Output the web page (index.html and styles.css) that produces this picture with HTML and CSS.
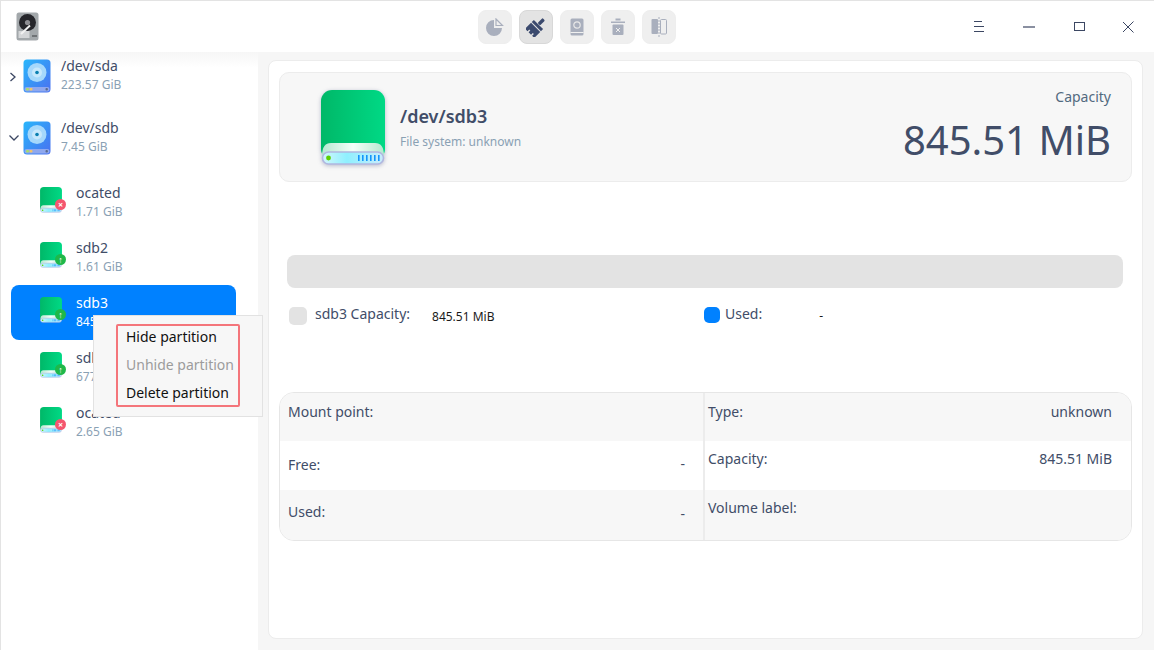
FILE: index.html
```html
<!DOCTYPE html>
<html lang="en">
<head>
  <meta charset="UTF-8" />
  <title>Disk Utility</title>
  <link rel="stylesheet" href="styles.css">
</head>
<body>
  <svg class="defs" width="0" height="0">
    <defs>
      <linearGradient id="blue-disk" x1="0" y1="0" x2="1" y2="1">
        <stop offset="0" stop-color="#29b6fb"/><stop offset="1" stop-color="#4a70f0"/>
      </linearGradient>
      <linearGradient id="green-disk" x1="0" y1="0" x2="1" y2="0">
        <stop offset="0" stop-color="#00b868"/><stop offset="1" stop-color="#00d985"/>
      </linearGradient>
      <linearGradient id="green-lip" x1="0" y1="0" x2="1" y2="0">
        <stop offset="0" stop-color="#b5e8d0"/><stop offset=".5" stop-color="#f4fffa"/><stop offset="1" stop-color="#b5e8d0"/>
      </linearGradient>
      <linearGradient id="green-base" x1="0" y1="0" x2="1" y2="0">
        <stop offset="0" stop-color="#d2f6fb"/><stop offset=".4" stop-color="#8ff0ff"/><stop offset="1" stop-color="#c9ecfb"/>
      </linearGradient>
      <symbol id="disk" viewBox="0 0 28 34">
        <rect x="0.5" y="0.5" width="27" height="33" rx="3.5" fill="url(#blue-disk)"/>
        <circle cx="14" cy="13.5" r="9.5" fill="#a5d8fb"/>
        <circle cx="14" cy="13.5" r="5" fill="#c7e8fc"/>
        <circle cx="14" cy="13.5" r="1.8" fill="#0a7fb0"/>
        <rect x="1.5" y="28" width="25" height="4.5" rx="2" fill="#8fa8ee"/>
        <rect x="3" y="29" width="3" height="2.4" rx="1" fill="#a8dc6c"/>
        <rect x="6.5" y="29" width="3" height="2.4" rx="1" fill="#f2c46a"/>
        <rect x="22.5" y="29" width="2.4" height="2.4" rx="1" fill="#596a8e"/>
      </symbol>
      <symbol id="part" viewBox="0 0 64 76">
        <rect x="0" y="0" width="64" height="70" rx="11" fill="url(#green-disk)"/>
        <path d="M1 66 q0 -13 9 -13 h44 q9 0 9 13 z" fill="url(#green-lip)"/>
        <rect x="1.5" y="62" width="61" height="12" rx="6" fill="url(#green-base)" stroke="#b0b6e0" stroke-width="1.6"/>
        <circle cx="7.5" cy="68" r="2.4" fill="#5fd000"/>
        <g fill="#1496fb">
          <rect x="37" y="65" width="1.6" height="6"/><rect x="41" y="65" width="1.6" height="6"/>
          <rect x="45" y="65" width="1.6" height="6"/><rect x="49" y="65" width="1.6" height="6"/>
          <rect x="53" y="65" width="1.6" height="6"/><rect x="57" y="65" width="1.6" height="6"/>
        </g>
      </symbol>
    </defs>
  </svg>

  <div class="window">
    <header class="titlebar">
      <div class="app-icon">
        <svg width="24" height="29" viewBox="0 0 24 29">
          <rect x="0.5" y="0.5" width="22" height="28" rx="2.5" fill="#a3a8ab"/>
          <circle cx="11.5" cy="10.5" r="8.5" fill="#26262b"/>
          <circle cx="11.5" cy="10.5" r="2.6" fill="#8d8d92"/>
          <rect x="2.5" y="19" width="11" height="7" fill="#d4d6d8"/>
          <path d="M5 22 L14 13.5" stroke="#f2f2f2" stroke-width="2"/>
          <rect x="16" y="23" width="5" height="2" fill="#6f7376"/>
        </svg>
      </div>

      <div class="toolbar">
        <button class="tool-btn">
          <svg width="18" height="18" viewBox="0 0 18 18">
            <path d="M8 2 A8 8 0 1 0 16 10 H8 Z" fill="#a9afbd"/>
            <path d="M10 1 L16.5 7.5 H10 Z" fill="none" stroke="#a9afbd" stroke-width="1.2"/>
          </svg>
        </button>
        <button class="tool-btn active">
          <svg width="20" height="20" viewBox="0 0 20 20">
            <g transform="rotate(45 10 10)" fill="#3b4a6e">
              <rect x="8.3" y="-1" width="3.4" height="7" rx="1"/>
              <rect x="3.5" y="6.5" width="13" height="3"/>
              <path d="M3.5 10.5 H16.5 V19 H13.5 V16.5 H12 V19 H8.5 V16.5 H7 V19 H3.5 Z"/>
            </g>
          </svg>
        </button>
        <button class="tool-btn">
          <svg width="14" height="18" viewBox="0 0 14 18">
            <rect x="0.5" y="0.5" width="13" height="17" rx="1.5" fill="#a9afbd"/>
            <rect x="0.5" y="14" width="13" height="1" fill="#f0f0f0"/>
            <circle cx="7" cy="7" r="3.2" fill="none" stroke="#e8e8e8" stroke-width="1.2"/>
          </svg>
        </button>
        <button class="tool-btn">
          <svg width="16" height="18" viewBox="0 0 16 18">
            <rect x="5.5" y="0.5" width="5" height="2" fill="#a9afbd"/>
            <rect x="1" y="3.5" width="14" height="1.5" fill="#a9afbd"/>
            <rect x="2.5" y="6.5" width="11" height="10.5" rx="1" fill="#a9afbd"/>
            <path d="M6 10 L10 14 M10 10 L6 14" stroke="#eee" stroke-width="1"/>
          </svg>
        </button>
        <button class="tool-btn">
          <svg width="16" height="20" viewBox="0 0 16 20">
            <rect x="0.5" y="2" width="6.5" height="15" rx="1" fill="#a9afbd"/>
            <rect x="9.5" y="2.5" width="6" height="14.5" rx="1" fill="none" stroke="#a9afbd"/>
            <path d="M8 0 V20" stroke="#a9afbd" stroke-dasharray="2 1"/>
          </svg>
        </button>
      </div>

      <div class="win-controls">
        <button class="win-btn">
          <svg width="12" height="11" viewBox="0 0 12 11"><path d="M1 .5 H9 M1 5.5 H11 M1 10.5 H11" stroke="#3c4763"/></svg>
        </button>
        <button class="win-btn">
          <svg width="12" height="2" viewBox="0 0 12 2"><path d="M0 1 H12" stroke="#3c4763" stroke-width="1.2"/></svg>
        </button>
        <button class="win-btn">
          <svg width="12" height="10" viewBox="0 0 12 10"><rect x="1.5" y=".5" width="10" height="8" fill="none" stroke="#3c4763"/></svg>
        </button>
        <button class="win-btn">
          <svg width="12" height="12" viewBox="1 0 12 12"><path d="M.5 .5 L11.5 11.5 M11.5 .5 L.5 11.5" stroke="#3c4763"/></svg>
        </button>
      </div>
    </header>

    <div class="body-row">
      <aside class="sidebar">
        <div class="disk-row">
          <svg class="chevron" width="8" height="10" viewBox="0 0 8 10"><path d="M1.5 1 L6 5 L1.5 9" fill="none" stroke="#3c4763" stroke-width="1.3"/></svg>
          <svg class="disk-icon" width="28" height="34"><use href="#disk"/></svg>
          <div class="names">
            <span class="name">/dev/sda</span>
            <span class="size">223.57 GiB</span>
          </div>
        </div>
        <div class="disk-row">
          <svg class="chevron" width="10" height="8" viewBox="0 0 10 8"><path d="M.5 1.5 L5 6 L9.5 1.5" fill="none" stroke="#3c4763" stroke-width="1.3"/></svg>
          <svg class="disk-icon" width="28" height="34"><use href="#disk"/></svg>
          <div class="names">
            <span class="name">/dev/sdb</span>
            <span class="size">7.45 GiB</span>
          </div>
        </div>

        <ul class="part-list">
          <li class="part-row">
            <span class="part-icon">
              <svg width="22" height="26"><use href="#part"/></svg>
              <span class="badge bad">×</span>
            </span>
            <div class="names"><span class="name">ocated</span><span class="size">1.71 GiB</span></div>
          </li>
          <li class="part-row">
            <span class="part-icon">
              <svg width="22" height="26"><use href="#part"/></svg>
              <span class="badge ok">↑</span>
            </span>
            <div class="names"><span class="name">sdb2</span><span class="size">1.61 GiB</span></div>
          </li>
          <li class="part-row selected">
            <span class="part-icon">
              <svg width="22" height="26"><use href="#part"/></svg>
              <span class="badge ok">↑</span>
            </span>
            <div class="names"><span class="name">sdb3</span><span class="size">845.51 MiB</span></div>
          </li>
          <li class="part-row">
            <span class="part-icon">
              <svg width="22" height="26"><use href="#part"/></svg>
              <span class="badge ok">↑</span>
            </span>
            <div class="names"><span class="name">sdb4</span><span class="size">677.00 MiB</span></div>
          </li>
          <li class="part-row">
            <span class="part-icon">
              <svg width="22" height="26"><use href="#part"/></svg>
              <span class="badge bad">×</span>
            </span>
            <div class="names"><span class="name">ocated</span><span class="size">2.65 GiB</span></div>
          </li>
        </ul>
      </aside>

      <main class="content">
        <section class="panel">
          <div class="info-card">
            <svg class="big-disk" width="64" height="76"><use href="#part"/></svg>
            <div class="info-names">
              <span class="info-title">/dev/sdb3</span>
              <span class="info-fs">File system: unknown</span>
            </div>
            <div class="capacity">
              <span class="cap-label">Capacity</span>
              <span class="cap-value">845.51 MiB</span>
            </div>
          </div>

          <div class="usage-bar"></div>

          <div class="legend">
            <div class="legend-item first">
              <span class="swatch grey"></span>
              <span class="legend-label">sdb3 Capacity:</span>
              <span class="legend-value cap">845.51 MiB</span>
            </div>
            <div class="legend-item">
              <span class="swatch blue"></span>
              <span class="legend-label">Used:</span>
              <span class="legend-value used">-</span>
            </div>
          </div>

          <div class="details">
            <div class="detail-row">
              <div class="cell"><span>Mount point:</span></div>
              <div class="cell"><span>Type:</span><span>unknown</span></div>
            </div>
            <div class="detail-row">
              <div class="cell"><span>Free:</span><span class="dash">-</span></div>
              <div class="cell"><span>Capacity:</span><span>845.51 MiB</span></div>
            </div>
            <div class="detail-row">
              <div class="cell"><span>Used:</span><span class="dash low">-</span></div>
              <div class="cell"><span>Volume label:</span></div>
            </div>
          </div>
        </section>
      </main>
    </div>

    <div class="context-menu">
      <div class="menu-frame">
        <div class="menu-item">Hide partition</div>
        <div class="menu-item disabled">Unhide partition</div>
        <div class="menu-item">Delete partition</div>
      </div>
    </div>
  </div>
</body>
</html>
```

FILE: styles.css
```css
* { box-sizing: border-box; }

html, body {
  margin: 0;
  height: 100%;
  overflow: hidden;
}

body {
  font-family: 'Noto Sans', sans-serif;
  font-size: 14px;
  color: #414d68;
  background: #fff;
}

.defs { position: absolute; }

.window {
  position: relative;
  width: 1154px;
  height: 650px;
  display: flex;
  flex-direction: column;
  border-top: 1px solid #e3e3e3;
  border-left: 1px solid #e3e3e3;
}

/* title bar */
.titlebar {
  height: 51px;
  flex: none;
  display: flex;
  align-items: center;
  background: #fff;
  position: relative;
}

.app-icon {
  width: 477px;
  padding-left: 15px;
  display: flex;
  align-items: center;
}

.toolbar {
  display: flex;
  gap: 7px;
}

.tool-btn {
  width: 34px;
  height: 34px;
  padding: 0;
  border: 1px solid #eeeeee;
  border-radius: 8px;
  background: #efefef;
  display: flex;
  align-items: center;
  justify-content: center;
}

.tool-btn.active {
  background: #e3e3e3;
  border-color: #d8d8d8;
}

.win-controls {
  margin-left: auto;
  display: flex;
}

.win-btn {
  width: 50px;
  height: 50px;
  padding: 0;
  border: none;
  background: none;
  display: flex;
  align-items: center;
  justify-content: center;
}

/* sidebar */
.body-row {
  flex: 1;
  display: flex;
  min-height: 0;
}

.sidebar {
  width: 257px;
  flex: none;
  background: linear-gradient(#f6f6f6, #ffffff 16px);
  padding-top: 3px;
}

.disk-row {
  height: 62px;
  display: flex;
  align-items: flex-start;
  padding-top: 1px;
  position: relative;
  padding-left: 22px;
}

.chevron {
  position: absolute;
  left: 8px;
  top: 17px;
}

.disk-icon {
  flex: none;
  margin-top: 3px;
}

.disk-row .names {
  margin-left: 10px;
}

.names {
  display: flex;
  flex-direction: column;
  line-height: 19px;
}

.name {
  font-size: 14px;
  color: #414d68;
}

.size {
  font-size: 12px;
  color: #8aa1b4;
  line-height: 20px;
}

.part-list {
  list-style: none;
  margin: 0;
  padding: 0;
  margin-top: -4px;
}

.part-row {
  height: 55px;
  width: 225px;
  margin-left: 10px;
  padding-left: 29px;
  border-radius: 8px;
  display: flex;
  align-items: center;
}

.part-row.selected {
  background: #0081ff;
}

.part-row.selected .name,
.part-row.selected .size {
  color: #fff;
}

.part-icon {
  position: relative;
  width: 22px;
  height: 26px;
  flex: none;
  margin-right: 14px;
  margin-top: -5px;
}

.part-icon svg { display: block; }

.badge {
  position: absolute;
  right: -4px;
  bottom: 3px;
  width: 11px;
  height: 11px;
  border-radius: 50%;
  color: #fff;
  font-size: 9px;
  font-weight: 700;
  line-height: 11px;
  text-align: center;
}

.badge.bad { background: #f4566f; }
.badge.ok { background: #1fb84a; }

/* right side */
.content {
  flex: 1;
  min-width: 0;
  background: #f6f6f6;
  padding: 8px 11px 11px 10px;
}

.panel {
  height: 100%;
  background: #fff;
  border: 1px solid #ececec;
  border-radius: 8px;
  padding: 11px 10px 0;
}

.info-card {
  height: 110px;
  background: #f7f7f7;
  border: 1px solid #ececec;
  border-radius: 10px;
  display: flex;
  align-items: center;
  padding: 0 20px 0 41px;
}

.big-disk {
  flex: none;
  margin-top: 1px;
  filter: drop-shadow(0 1px 2px rgba(60, 70, 120, 0.35));
}

.info-names {
  display: flex;
  flex-direction: column;
  margin-left: 15px;
  margin-top: 2px;
}

.info-title {
  font-size: 18px;
  font-weight: 600;
  line-height: 26px;
  margin-bottom: 2px;
  color: #414d68;
}

.info-fs {
  font-size: 12px;
  line-height: 22px;
  color: #8aa1b4;
}

.capacity {
  margin-left: auto;
  display: flex;
  flex-direction: column;
  align-items: flex-end;
}

.cap-label {
  font-size: 14px;
  line-height: 20px;
  color: #526a7f;
}

.cap-value {
  font-size: 40px;
  line-height: 54px;
  margin-top: 6px;
  color: #414d68;
}

.usage-bar {
  height: 33px;
  margin: 73px 9px 0 8px;
  background: #e3e3e3;
  border-radius: 8px;
}

.legend {
  display: flex;
  margin-top: 17px;
  padding-left: 10px;
  height: 22px;
  align-items: center;
}

.legend-item {
  display: flex;
  align-items: center;
}

.legend-item.first {
  width: 415px;
}

.swatch {
  width: 18px;
  height: 18px;
  border-radius: 5px;
  flex: none;
}

.swatch.grey { background: #e3e3e3; }

.swatch.blue {
  background: #0081ff;
  width: 16px;
  height: 16px;
  position: relative;
  top: -1px;
}

.legend-label {
  margin-left: 8px;
  line-height: 18px;
  position: relative;
  top: -2px;
}

.swatch.blue + .legend-label { margin-left: 5px; }

.legend-value {
  font-size: 12px;
  color: #1a1a1a;
}

.legend-value.cap { margin-left: 22px; }

.legend-value.used {
  margin-left: 57px;
  position: relative;
  top: -1px;
}

.details {
  margin-top: 65px;
  height: 149px;
  border: 1px solid #e6e6e6;
  border-radius: 15px;
  overflow: hidden;
  display: flex;
  flex-direction: column;
}

.detail-row {
  height: 49px;
  display: flex;
  background: #fff;
}

.detail-row:nth-child(odd) {
  background: #f7f7f7;
}

.detail-row:nth-child(1) { height: 48px; }
.detail-row:nth-child(3) { height: 50px; }

.cell {
  flex: 1;
  display: flex;
  justify-content: space-between;
  padding: 9px 19px 0 3px;
  line-height: 20px;
}

.cell:first-child {
  width: 425px;
  flex: none;
  padding: 9px 18px 0 8px;
  border-right: 2px solid #ececec;
}

.detail-row:nth-child(2) .cell:first-child { padding-top: 14px; }
.detail-row:nth-child(3) .cell:first-child { padding-top: 12px; }
.detail-row:nth-child(n+2) .cell:last-child { padding-top: 8px; }

.dash {
  font-size: 14px;
  position: relative;
  top: -1px;
}

.dash.low {
  top: 2px;
}

/* popup menu over the selected row */
.context-menu {
  position: absolute;
  left: 92px;
  top: 314px;
  width: 170px;
  height: 102px;
  background: #f7f7f7;
  border: 1px solid #e2e2e2;
  padding: 8px 0 0 22px;
}

.menu-frame {
  width: 124px;
  height: 83px;
  border: 2px solid #f4757b;
  border-radius: 2px;
  padding-left: 8px;
}

.menu-item {
  height: 28px;
  line-height: 22px;
  color: #111;
  white-space: nowrap;
  font-size: 14px;
}

.menu-item.disabled {
  color: #9c9c9c;
}
```
